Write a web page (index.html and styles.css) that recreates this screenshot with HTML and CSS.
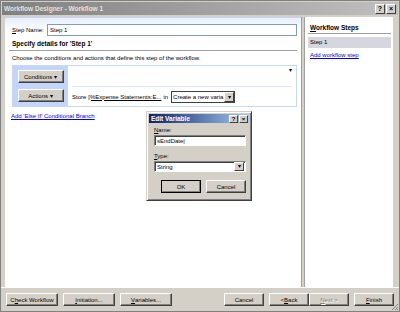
FILE: index.html
```html
<!DOCTYPE html>
<html>
    <head>
        <meta charset="UTF-8">
        <title>Workflow Designer</title>
        <link rel="stylesheet" href="styles.css">
    </head>
    <body>
        <div class="window">
            <div class="titlebar">
                <span class="title">Workflow Designer - Workflow 1</span>
                <span class="tbtns"><span class="tbtn">?</span><span class="tbtn">&#215;</span></span>
            </div>
            <div class="panes">
                <div class="main">
                    <div class="step-row">
                        <span class="lbl"><u>S</u>tep Name:</span>
                        <span class="field">Step 1</span>
                    </div>
                    <div class="heading">Specify details for 'Step 1'</div>
                    <div class="hint">Choose the conditions and actions that define this step of the workflow.</div>
                    <div class="rulebox">
                        <div class="rule-left">
                            <span class="btn small">Conditions &#9662;</span>
                            <span class="btn small">Actions &#9662;</span>
                        </div>
                        <div class="rule-right">
                            <div class="cond-row"><span class="menu-arrow">&#9662;</span></div>
                            <div class="act-row">
                                Store <span class="ulink">[%Expense Statements:E...</span> in
                                <span class="combo"><span class="combo-text">Create a new varia</span><span class="combo-btn">&#9662;</span></span>
                            </div>
                        </div>
                    </div>
                    <div class="link else">Add 'Else If' Conditional Branch</div>
                </div>
                <div class="side">
                    <div class="side-head"><u>W</u>orkflow Steps</div>
                    <div class="side-sel">Step 1</div>
                    <div class="link">Add workflow step</div>
                </div>
            </div>
            <div class="footer">
                <span class="btn fbtn wide">C<u>h</u>eck Workflow</span>
                <span class="btn fbtn wide"><u>I</u>nitiation...</span>
                <span class="btn fbtn wide"><u>V</u>ariables...</span>
                <span class="spacer"></span>
                <span class="btn fbtn">Cancel</span>
                <span class="pair">
                    <span class="btn fbtn">&lt; <u>B</u>ack</span>
                    <span class="btn fbtn disabled"><u>N</u>ext &gt;</span>
                </span>
                <span class="btn fbtn"><u>F</u>inish</span>
                <svg class="grip" width="8" height="8" viewBox="0 0 8 8">
                    <path d="M7 1L1 7M7 4L4 7M7 6L6 7" stroke="#808080" stroke-width="1"/>
                </svg>
            </div>

            <div class="dialog">
                <div class="dtitle">
                    <span>Edit Variable</span>
                    <span class="tbtns"><span class="tbtn">?</span><span class="tbtn">&#215;</span></span>
                </div>
                <div class="dbody">
                    <div class="dlbl"><u>N</u>ame:</div>
                    <div class="dfield">sEndDate|</div>
                    <div class="dlbl type"><u>T</u>ype:</div>
                    <div class="dselect"><span>String</span><span class="combo-btn">&#9662;</span></div>
                    <div class="dbtns">
                        <span class="btn dbtn default">OK</span>
                        <span class="btn dbtn">Cancel</span>
                    </div>
                </div>
            </div>
        </div>
    </body>
</html>
```

FILE: styles.css
```css
body {
    margin: 0;
    font-family: "Liberation Sans", Arial, sans-serif;
    font-size: 6px;
    color: #000;
}
u {
    text-decoration: underline;
}
.window {
    position: relative;
    width: 400px;
    height: 312px;
    box-sizing: border-box;
    background: #d4d0c8;
    border: 1px solid #808080;
    display: flex;
    flex-direction: column;
}
.titlebar {
    height: 13px;
    margin: 1px 1px 0 1px;
    background: linear-gradient(to right, #808080, #c0c0c0);
    color: #e4e2dc;
    font-weight: bold;
    font-size: 6.5px;
    display: flex;
    align-items: center;
    justify-content: space-between;
    padding: 0 2px;
}
.tbtns {
    display: flex;
    gap: 1px;
}
.tbtn {
    width: 8px;
    height: 8px;
    background: #d4d0c8;
    color: #000;
    border: 1px solid;
    border-color: #fff #404040 #404040 #fff;
    font-size: 7px;
    line-height: 8px;
    text-align: center;
}
.panes {
    flex: 1;
    display: flex;
    gap: 3px;
    padding: 2px 6px 0 4px;
}
.main {
    width: 296px;
    background: linear-gradient(to bottom, #e8eefb, #fff 14px);
    border-top: 1px solid #c6d3f7;
    padding: 6px 4px 0 7px;
    box-sizing: border-box;
}
.step-row {
    display: flex;
    align-items: center;
    height: 11px;
}
.lbl {
    width: 35px;
}
.field {
    flex: 1;
    height: 10px;
    line-height: 10px;
    border: 1px solid #7f9db9;
    background: #fff;
    padding-left: 2px;
}
.heading {
    font-weight: bold;
    font-size: 6.5px;
    margin: 4px 0 0 -3px;
    padding: 0 0 2px 3px;
    border-bottom: 1px solid #a0a0a0;
    line-height: 9px;
}
.hint {
    margin-top: 3px;
    line-height: 8px;
}
.rulebox {
    margin-top: 3px;
    height: 42px;
    display: flex;
    border: 1px solid #c6d7f7;
    box-sizing: border-box;
}
.rule-left {
    width: 55px;
    background: #c3d5fa;
    display: flex;
    flex-direction: column;
    align-items: center;
    justify-content: space-around;
    padding: 1px 0;
}
.rule-right {
    flex: 1;
    background: #fff;
    display: flex;
    flex-direction: column;
}
.cond-row {
    height: 20px;
    border-bottom: 1px solid #dde6f8;
    margin: 0 4px;
    display: flex;
    justify-content: flex-end;
}
.menu-arrow {
    font-size: 6px;
    line-height: 9px;
}
.act-row {
    flex: 1;
    display: flex;
    align-items: center;
    gap: 2px;
    padding-left: 4px;
}
.ulink {
    text-decoration: underline;
}
.combo {
    display: flex;
    align-items: center;
    height: 10px;
    border: 1px solid #404040;
    background: #fff;
    margin-left: 1px;
}
.combo-text {
    padding: 0 1px;
}
.combo-btn {
    width: 8px;
    height: 8px;
    background: #d4d0c8;
    border: 1px solid;
    border-color: #fff #404040 #404040 #fff;
    font-size: 6px;
    line-height: 8px;
    text-align: center;
}
.btn {
    display: inline-flex;
    align-items: center;
    justify-content: center;
    background: #d4d0c8;
    border: 1px solid;
    border-color: #fff #404040 #404040 #fff;
    box-shadow: inset -1px -1px #808080;
    box-sizing: border-box;
}
.small {
    width: 46px;
    height: 13px;
}
.link {
    color: #0000ee;
    text-decoration: underline;
    line-height: 8px;
}
.else {
    margin: 5px 0 0 -1px;
}
.side {
    flex: 1;
    background: #fff;
    border-left: 1px solid #a0a0a0;
    box-shadow: -2px 0 0 #d4d0c8, -3px 0 0 #a0a0a0;
    padding: 7px 2px 0 3px;
}
.side-head {
    font-weight: bold;
    font-size: 6.5px;
    line-height: 8px;
    padding: 0 0 1px 2px;
    border-bottom: 1px solid #a0a0a0;
}
.side-sel {
    margin-top: 3px;
    height: 11px;
    line-height: 11px;
    background: #d6d6de;
    padding-left: 2px;
}
.side .link {
    margin: 3px 0 0 2px;
}
.footer {
    position: relative;
    height: 23px;
    display: flex;
    align-items: center;
    gap: 5px;
    padding: 0 5px;
    border-top: 1px solid #fff;
}
.fbtn {
    width: 40px;
    height: 13px;
}
.wide {
    width: 52px;
}
.spacer {
    flex: 1;
}
.pair {
    display: flex;
}
.disabled {
    color: #808080;
    text-shadow: 1px 1px #fff;
}
.grip {
    position: absolute;
    right: 0;
    bottom: 0;
}
.dialog {
    position: absolute;
    left: 145px;
    top: 110px;
    width: 106px;
    height: 90px;
    box-sizing: border-box;
    background: #d4d0c8;
    border: 1px solid;
    border-color: #d4d0c8 #404040 #404040 #d4d0c8;
    box-shadow: inset 1px 1px #fff, inset -1px -1px #808080;
    padding: 2px;
}
.dtitle {
    height: 9px;
    background: linear-gradient(to right, #0a246a, #a6caf0);
    color: #fff;
    font-weight: bold;
    font-size: 6.5px;
    display: flex;
    align-items: center;
    justify-content: space-between;
    padding: 0 1px 0 2px;
}
.dtitle .tbtn {
    width: 7px;
    height: 6px;
    line-height: 6px;
    font-size: 6px;
}
.dbody {
    padding: 3px 3px 0 5px;
}
.dlbl {
    line-height: 8px;
}
.type {
    margin-top: 6px;
}
.dfield, .dselect {
    height: 9px;
    margin-top: 1px;
    background: #fff;
    border: 1px solid;
    border-color: #808080 #fff #fff #808080;
    box-shadow: inset 1px 1px #404040;
    padding-left: 2px;
    display: flex;
    align-items: center;
    justify-content: space-between;
}
.dselect .combo-btn {
    margin-right: 1px;
    height: 7px;
    line-height: 7px;
}
.dbtns {
    display: flex;
    justify-content: flex-end;
    gap: 5px;
    margin-top: 8px;
}
.dbtn {
    width: 40px;
    height: 13px;
}
.default {
    outline: 1px solid #000;
    outline-offset: -1px;
}
```
